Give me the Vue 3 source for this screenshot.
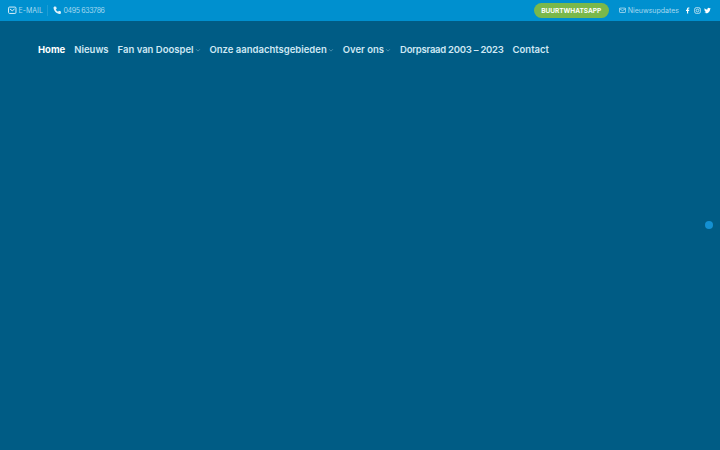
<template>
  <div class="page">
    <div class="topbar">
      <div class="top-left">
        <a class="top-link">
          <svg class="icon" viewBox="0 0 16 16"><rect x="1" y="2" width="14" height="12" rx="2" fill="none" stroke="currentColor" stroke-width="1.800"/><path d="M3.500 5.500 8 9l4.500-3.500" fill="none" stroke="currentColor" stroke-width="1.800"/></svg>
          E-MAIL
        </a>
        <span class="divider"></span>
        <a class="top-link">
          <svg class="icon" viewBox="0 0 16 16"><path d="M3.500 1 6 1.500 7 5 5.300 6.500C6 8.300 7.700 10 9.500 10.700L11 9l3.500 1 .5 2.500C15 14 13.800 15 12.500 15 6.500 14.500 1.500 9.500 1 3.500 1 2.200 2 1 3.500 1Z" fill="currentColor"/></svg>
          <span class="phone">0495 633786</span>
        </a>
      </div>
      <div class="top-right">
        <a class="pill">BUURTWHATSAPP</a>
        <a class="top-link news">
          <svg class="icon" viewBox="0 0 16 16"><rect x="1" y="3" width="14" height="10" rx="1.500" fill="none" stroke="currentColor" stroke-width="1.500"/><path d="M1.500 4.500 8 9l6.500-4.500" fill="none" stroke="currentColor" stroke-width="1.500"/></svg>
          Nieuwsupdates
        </a>
        <div class="socials">
          <svg class="social fb" viewBox="0 0 16 16"><path d="M9.500 15V9h2.200l.4-2.600H9.500V4.800c0-.8.3-1.300 1.300-1.300h1.400V1.200C11.900 1.100 11.100 1 10.200 1 8.200 1 6.900 2.200 6.900 4.400v2H4.600V9h2.300v6Z" fill="#fff"/></svg>
          <svg class="social" viewBox="0 0 16 16"><rect x="1.500" y="1.500" width="13" height="13" rx="3.500" fill="none" stroke="#fff" stroke-width="1.500"/><circle cx="8" cy="8" r="3" fill="none" stroke="#fff" stroke-width="1.500"/><circle cx="11.800" cy="4.200" r=".9" fill="#fff"/></svg>
          <svg class="social" viewBox="0 0 16 16"><path d="M15.500 3.400c-.6.300-1.200.4-1.800.5.600-.4 1.100-1 1.400-1.700-.6.400-1.300.6-2 .8a3.100 3.100 0 0 0-5.300 2.800C5.200 5.700 2.900 4.500 1.400 2.600c-.8 1.400-.4 3.200 1 4.100-.5 0-1-.2-1.400-.4 0 1.500 1.100 2.800 2.500 3.100-.5.100-.9.100-1.400 0 .4 1.200 1.500 2.100 2.900 2.100A6.300 6.300 0 0 1 .5 12.800 8.800 8.800 0 0 0 14 5c.6-.4 1.100-1 1.500-1.600Z" fill="#fff"/></svg>
        </div>
      </div>
    </div>
    <nav class="nav">
      <a v-for="item in menu" :key="item.label" class="nav-item" :class="{ active: item.active, years: item.years }">
        {{ item.label }}
        <svg v-if="item.sub" class="caret" viewBox="0 0 8 8"><path d="M1.500 3 4 5.500 6.500 3" fill="none" stroke="currentColor" stroke-width=".8"/></svg>
      </a>
    </nav>
    <span class="dot"></span>
  </div>
</template>

<script setup>
const menu = [
  { label: 'Home', active: true },
  { label: 'Nieuws' },
  { label: 'Fan van Doospel', sub: true },
  { label: 'Onze aandachtsgebieden', sub: true },
  { label: 'Over ons', sub: true },
  { label: 'Dorpsraad 2003 – 2023', years: true },
  { label: 'Contact' },
];
</script>

<style>
html, body {
  margin: 0;
  background: #005c85;
}
</style>

<style scoped>
.page {
  position: relative;
  width: 720px;
  height: 450px;
  overflow: hidden;
  background: #005c85;
  font-family: Inter, "Open Sans", sans-serif;
}
.topbar {
  height: 21px;
  background: #0090cf;
  display: flex;
  justify-content: space-between;
  align-items: center;
  padding: 0 9px 0 8px;
}
.top-left, .top-right {
  display: flex;
  align-items: center;
}
.top-link {
  display: flex;
  align-items: center;
  gap: 2px;
  color: #a6d9f0;
  font-size: 7px;
}
.phone {
  letter-spacing: -0.35px;
}
.icon {
  width: 8.500px;
  height: 8.500px;
  color: #dff2fb;
}
.divider {
  width: 1px;
  height: 11px;
  background: rgba(255, 255, 255, 0.12);
  margin: 0 4.500px;
}
.pill {
  width: 75px;
  height: 15px;
  border-radius: 8px;
  background: #7ab84b;
  color: #fff;
  font-size: 6.500px;
  font-weight: 700;
  display: flex;
  align-items: center;
  justify-content: center;
}
.news {
  margin-left: 10px;
  gap: 2px;
}
.news .icon {
  width: 7px;
}
.socials {
  display: flex;
  align-items: center;
  gap: 3px;
  margin-left: 5px;
}
.social {
  width: 7px;
  height: 7px;
}
.nav {
  display: flex;
  align-items: center;
  gap: 9px;
  height: 57px;
  padding-left: 38px;
}
.nav-item {
  display: flex;
  align-items: center;
  color: #cfe8f4;
  font-size: 9.500px;
  font-weight: 600;
  white-space: nowrap;
}
.nav-item.years {
  letter-spacing: -0.25px;
}
.nav-item.active {
  color: #fff;
  font-weight: 700;
}
.caret {
  width: 6px;
  height: 6px;
  margin-left: 1px;
  opacity: 0.6;
}
.dot {
  position: absolute;
  left: 705px;
  top: 221px;
  width: 8px;
  height: 8px;
  border-radius: 50%;
  background: #1490d2;
}
</style>
